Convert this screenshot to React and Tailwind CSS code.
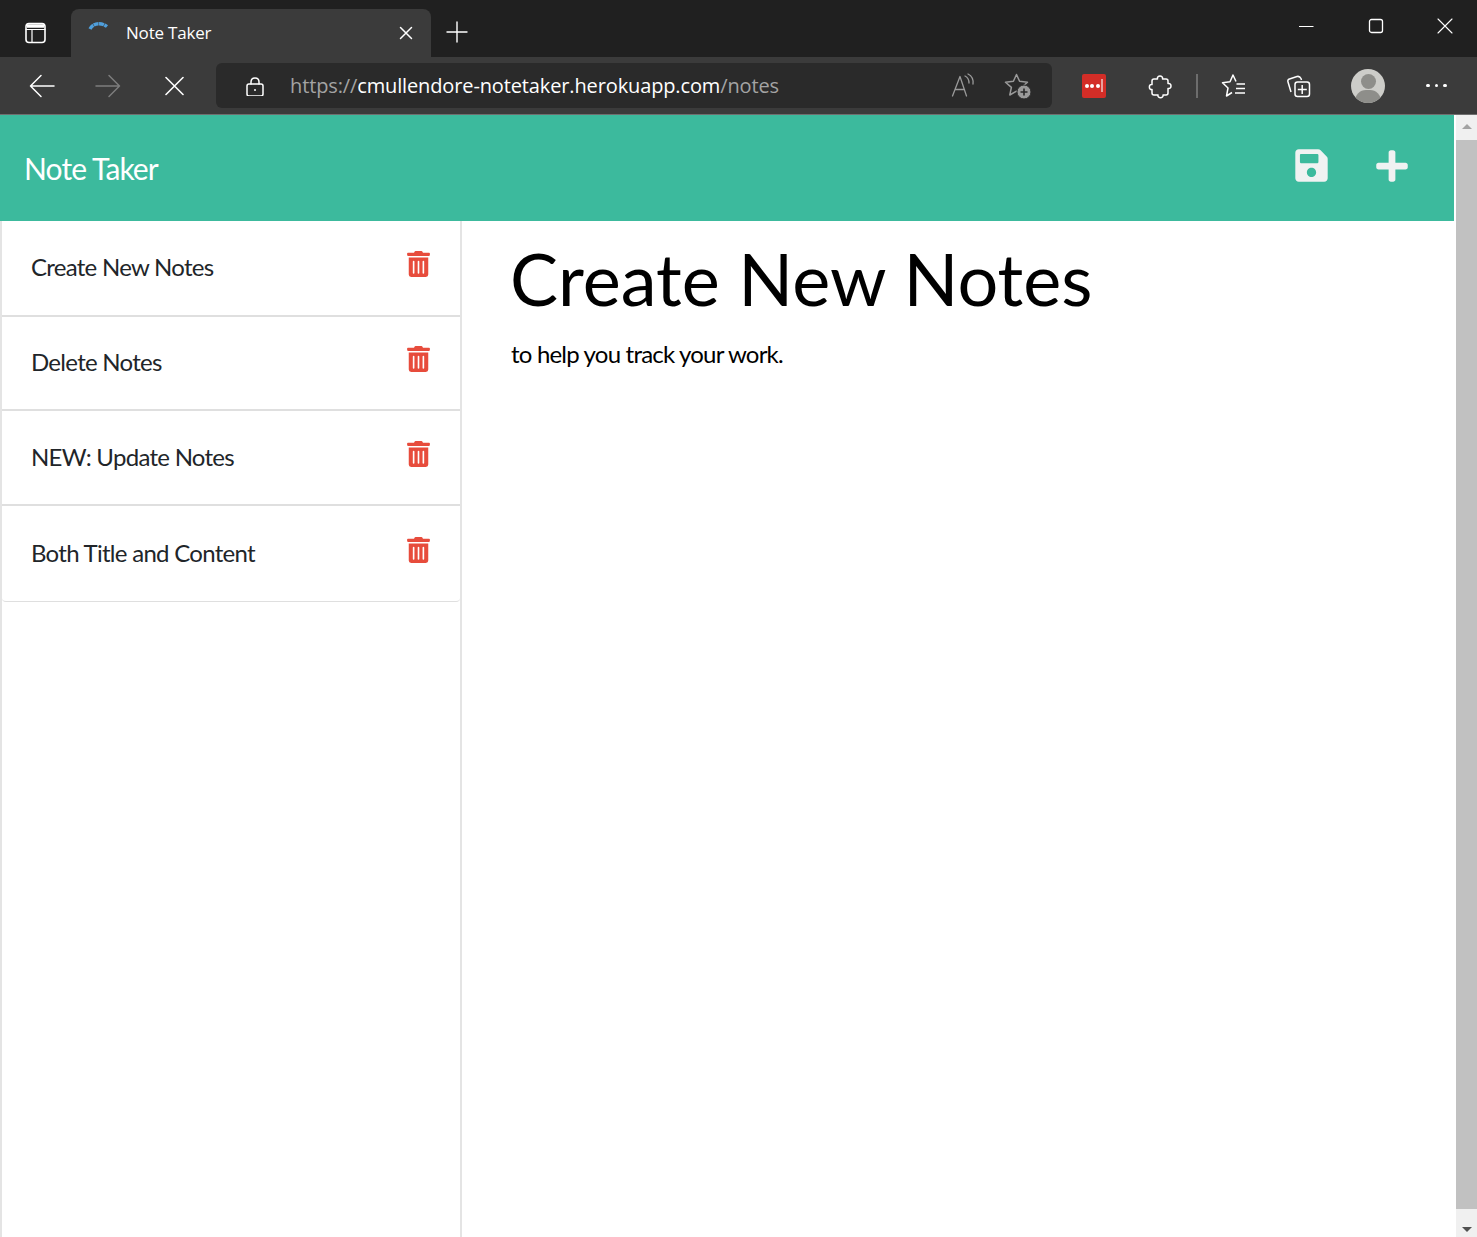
import React from 'react'
import { FaSave, FaPlus, FaTrashAlt } from 'react-icons/fa'

const notes = ['Create New Notes', 'Delete Notes', 'NEW: Update Notes', 'Both Title and Content']

const Icon = ({ className = '', size = 24, children, stroke = 'currentColor', strokeWidth = 1.5 }) => (
  <svg
    width={size}
    height={size}
    viewBox={`0 0 ${size} ${size}`}
    fill="none"
    stroke={stroke}
    strokeWidth={strokeWidth}
    strokeLinecap="round"
    strokeLinejoin="round"
    className={className}
  >
    {children}
  </svg>
)

const TitleBar = () => (
  <div className="flex h-[57px] bg-[#202020] text-white">
    <div className="flex w-[71px] shrink-0 items-center justify-center pt-[8px] pr-[1px]">
      <Icon size={24} strokeWidth={1.6} className="mr-[-1px]">
        <rect x="2" y="2.5" width="19" height="19" rx="3" />
        <path d="M2 8.5 H21 M8 8.5 V21.5" strokeWidth="1.2" />
        <path d="M3 5 H20" strokeWidth="3.5" strokeLinecap="butt" />
      </Icon>
    </div>
    <div className="mt-[9px] flex h-[48px] w-[360px] shrink-0 items-center rounded-t-[8px] bg-[#3b3b3b] pb-[1px]">
      <svg width="24" height="16" viewBox="0 0 24 16" fill="none" className="ml-[16px] mb-[14px]">
        <path d="M3 11 C6 5 14 4 20 8.5" stroke="#4f9fdc" strokeWidth="3.4" strokeDasharray="5 0.5" />
      </svg>
      <span className="ml-[15px] font-['Open_Sans',sans-serif] text-[17px] tracking-[-0.2px] text-white">Note Taker</span>
      <Icon size={16} strokeWidth={1.5} className="ml-auto mr-[17px] mt-[1px]">
        <path d="M2.5 2.5 L13.5 13.5 M13.5 2.5 L2.5 13.5" />
      </Icon>
    </div>
    <div className="flex w-[52px] shrink-0 items-center justify-center pt-[7px]">
      <Icon size={24} strokeWidth={1.4}>
        <path d="M12 2 V22 M2 12 H22" />
      </Icon>
    </div>
    <div className="ml-auto flex h-[52px] items-center pr-[24px] pb-[1px]">
      <Icon size={16} strokeWidth={1} className="mr-[54px]">
        <path d="M1 8.5 H15.5" strokeLinecap="butt" />
      </Icon>
      <Icon size={16} strokeWidth={1.3} className="mr-[53px]">
        <rect x="1.5" y="1.5" width="13" height="13" rx="2" />
      </Icon>
      <Icon size={16} strokeWidth={1.1}>
        <path d="M1 1 L15 15 M15 1 L1 15" />
      </Icon>
    </div>
  </div>
)

const ToolBar = () => (
  <div className="flex h-[58px] items-center border-b border-[#6f6f6f] bg-[#3b3b3b] text-white">
    <Icon size={26} strokeWidth={1.5} className="ml-[29px]">
      <path d="M1.5 13 H25 M12 2.5 L1.5 13 L12 23.5" />
    </Icon>
    <Icon size={26} strokeWidth={1.5} stroke="#7d7d7d" className="ml-[40px]">
      <path d="M1 13 H24.5 M14 2.5 L24.5 13 L14 23.5" />
    </Icon>
    <Icon size={20} strokeWidth={1.6} className="ml-[43px]">
      <path d="M2 1.5 L19 18.5 M19 1.5 L2 18.5" />
    </Icon>
    <div className="ml-[32px] flex h-[45px] w-[836px] shrink-0 items-center rounded-[6px] bg-[#2a2a2a]">
      <Icon size={20} strokeWidth={1.5} className="ml-[29px]">
        <path d="M6 8 V6 C6 0.5 14 0.5 14 6 V8" />
        <rect x="2" y="8" width="16" height="12" rx="2" />
        <circle cx="10" cy="14" r="1" fill="white" stroke="none" />
      </Icon>
      <span className="ml-[25px] whitespace-nowrap font-['Open_Sans',sans-serif] text-[20px] tracking-[-0.13px] text-[#a3a3a3]">
        https://<span className="text-white">cmullendore-notetaker.herokuapp.com</span>/notes
      </span>
      <Icon size={26} strokeWidth={1.3} stroke="#9a9a9a" className="ml-auto">
        <path d="M2.5 23 L10 3.5 L16.5 23 M5 16.5 H14.5" />
        <path d="M15 3 C18 4.5 19 7 19 10 M18 1 C22 3 23.5 7 23 11" />
      </Icon>
      <svg width="28" height="28" viewBox="0 0 28 28" fill="none" className="ml-[28px] mr-[20px]">
        <path
          d="M12.5 2.5 L15.6 9.3 L23.5 10.2 L17.6 15.4 L19.2 23 L12.5 19.2 L5.8 23 L7.4 15.4 L1.5 10.2 L9.4 9.3 Z"
          stroke="#9a9a9a"
          strokeWidth="1.5"
          strokeLinejoin="round"
        />
        <circle cx="20" cy="20" r="7" fill="#9a9a9a" stroke="#2a2a2a" strokeWidth="1" />
        <path d="M20 16.5 V23.5 M16.5 20 H23.5" stroke="#2a2a2a" strokeWidth="1.6" />
      </svg>
    </div>
    <div className="ml-[30px] flex h-[24px] w-[24px] items-center justify-center gap-[1.5px] rounded-[2px] bg-[#d32d27]">
      <span className="h-[4px] w-[4px] rounded-full bg-white" />
      <span className="h-[4px] w-[4px] rounded-full bg-white" />
      <span className="h-[4px] w-[4px] rounded-full bg-white" />
      <span className="h-[13px] w-[2px] bg-[#e8a09d]" />
    </div>
    <svg width="24" height="26" viewBox="0 0 24 26" fill="none" className="ml-[42px]">
      <path
        d="M6 6 H9.5 C8.5 2 15.5 2 14.5 6 H18 C19 6 20 7 20 8 V10.5 C24 9.5 24 16.5 20 15.5 V20 C20 21 19 22 18 22 H15 C16 25.5 9 25.5 10 22 H6 C5 22 4 21 4 20 V16.5 C0.5 17.5 0.5 10.5 4 11.5 V8 C4 7 5 6 6 6 Z"
        stroke="white"
        strokeWidth="1.5"
        strokeLinejoin="round"
      />
    </svg>
    <div className="ml-[24px] h-[24px] w-[2px] bg-[#6d6d6d]" />
    <svg width="26" height="26" viewBox="0 0 26 26" fill="none" className="ml-[23px]">
      <path
        d="M15 8.5 L12 2 L9 8.7 L1.5 9.8 L7 15 L5.5 23 L11 19.5"
        stroke="white"
        strokeWidth="1.5"
        strokeLinejoin="round"
      />
      <path d="M15.5 11 H24 M15 15.5 H24 M14 20 H24" stroke="white" strokeWidth="1.3" />
    </svg>
    <svg width="26" height="26" viewBox="0 0 26 26" fill="none" className="ml-[39px]">
      <path
        d="M5 19 L2 9 C1.5 7.5 2 6.5 3.5 6 L11 3.5 C13 3 14 3.5 15 5.5 L15.5 7"
        stroke="white"
        strokeWidth="1.5"
      />
      <rect x="9" y="9" width="14.5" height="14.5" rx="2.5" stroke="white" strokeWidth="1.5" />
      <path d="M16.2 12 V21 M11.8 16.5 H20.8" stroke="white" strokeWidth="1.5" />
    </svg>
    <div className="relative ml-[39px] h-[34px] w-[34px] shrink-0 overflow-hidden rounded-full bg-[#cdcdc9]">
      <div className="absolute left-[10px] top-[5px] h-[15px] w-[15px] rounded-full bg-[#8e8e8a]" />
      <div className="absolute left-[4px] top-[21px] h-[22px] w-[26px] rounded-full bg-[#8e8e8a]" />
    </div>
    <div className="ml-[41px] flex items-center gap-[5px]">
      <span className="h-[3.5px] w-[3.5px] rounded-full bg-white" />
      <span className="h-[3.5px] w-[3.5px] rounded-full bg-white" />
      <span className="h-[3.5px] w-[3.5px] rounded-full bg-white" />
    </div>
  </div>
)

const Scrollbar = () => (
  <div className="flex w-[21px] shrink-0 flex-col bg-[#f0f0f0]">
    <div className="flex h-[25px] shrink-0 items-center justify-center pb-[2px]">
      <div className="h-0 w-0 border-x-[5.5px] border-b-[5.5px] border-x-transparent border-b-[#a3a3a3]" />
    </div>
    <div className="grow bg-[#c1c1c1]" />
    <div className="flex h-[28px] shrink-0 items-end justify-center pb-[5px]">
      <div className="h-0 w-0 border-x-[5.5px] border-t-[5.5px] border-x-transparent border-t-[#505050]" />
    </div>
  </div>
)

const NoteItem = ({ title, heightClass, last }) => (
  <div
    className={`flex items-center justify-between border-[#dfdfdf] pb-[2px] pl-[29px] pr-[30px] ${heightClass} ${
      last ? 'rounded-b-[4px] border-b' : 'border-b-2'
    }`}
  >
    <span className="text-[24px] leading-none tracking-[-0.72px] text-[#212529]">{title}</span>
    <FaTrashAlt className="mb-[6px] h-[26px] w-[23px] text-[#e74c3c]" />
  </div>
)

export default function App() {
  return (
    <div className="flex h-[1237px] w-full flex-col overflow-hidden bg-white font-['Lato',sans-serif]">
      <TitleBar />
      <ToolBar />
      <div className="flex min-h-0 grow">
        <div className="flex min-w-0 grow flex-col">
          <div className="flex h-[106px] shrink-0 items-center bg-[#3cba9d] pl-[24px] pr-[46px]">
            <span className="text-[30px] tracking-[-0.9px] text-white">Note Taker</span>
            <FaSave className="mb-[5px] ml-auto h-[37px] w-[33px] text-[#f0f2f2]" />
            <FaPlus className="mb-[5px] ml-[48px] h-[36px] w-[32px] text-[#f0f2f2]" />
          </div>
          <div className="flex min-h-0 grow">
            <div className="w-[462px] shrink-0 border-r-2 border-l-2 border-[#e4e4e4]">
              <NoteItem title={notes[0]} heightClass="h-[96px]" />
              <NoteItem title={notes[1]} heightClass="h-[94px]" />
              <NoteItem title={notes[2]} heightClass="h-[95px]" />
              <NoteItem title={notes[3]} heightClass="h-[96px]" last />
            </div>
            <div className="pl-[49px] pt-[14px] text-black">
              <h1 className="-ml-[1px] text-[72px] leading-[86px] tracking-[0.04px]">Create New Notes</h1>
              <p className="mt-[17px] text-[24px] leading-[32px] tracking-[-0.8px]">to help you track your work.</p>
            </div>
          </div>
        </div>
        <div className="w-[2px] shrink-0 bg-white" />
        <Scrollbar />
      </div>
    </div>
  )
}
